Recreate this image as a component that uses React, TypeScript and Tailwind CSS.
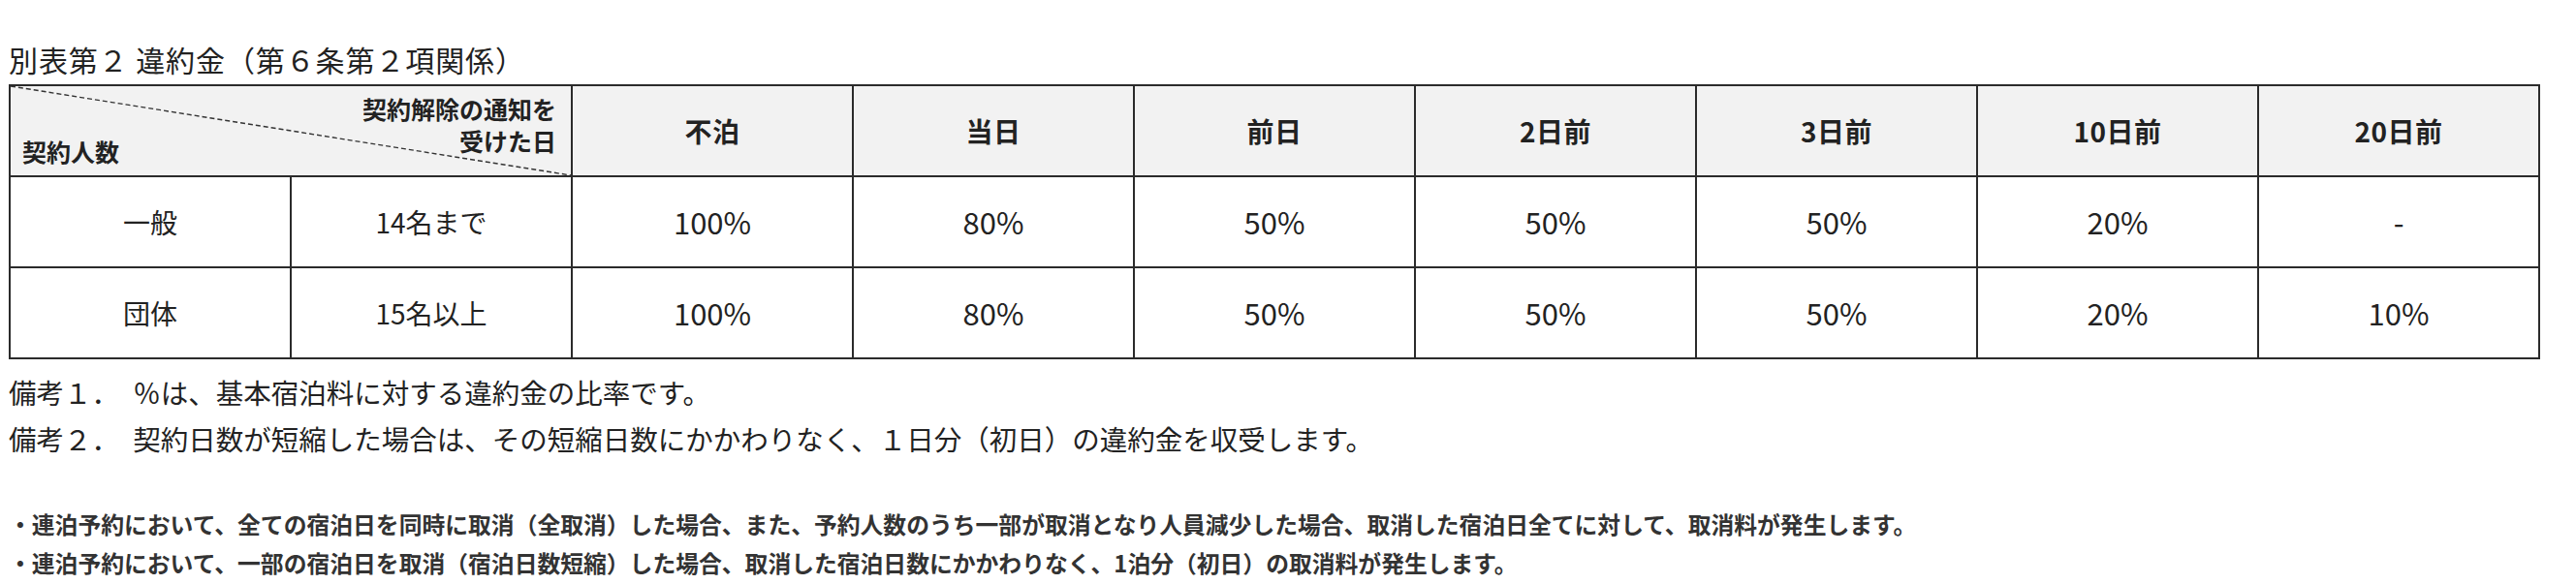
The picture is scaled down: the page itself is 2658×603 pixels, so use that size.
const COLS = ["不泊", "当日", "前日", "2日前", "3日前", "10日前", "20日前"];

const ROWS = [
  { type: "一般", size: "14名まで", values: ["100%", "80%", "50%", "50%", "50%", "20%", "-"] },
  { type: "団体", size: "15名以上", values: ["100%", "80%", "50%", "50%", "50%", "20%", "10%"] },
];

const cell = "border-2 border-[#2b2b2b] text-center align-middle";

export default function App() {
  return (
    <div
      className="min-h-[603px] bg-white pl-[9px] pt-[43px] text-[#222]"
      style={{ fontFamily: '"Noto Sans CJK JP", "Noto Sans", sans-serif' }}
    >
      <h1 className="text-[30px] leading-[37px] font-normal tracking-[0.03em]">
        別表第２ 違約金（第６条第２項関係）
      </h1>

      <table className="mt-[7px] w-[2610px] table-fixed border-collapse">
        <colgroup>
          {Array.from({ length: 9 }).map((_, i) => (
            <col key={i} className="w-[290px]" />
          ))}
        </colgroup>
        <thead>
          <tr className="h-[94px] bg-[#f2f2f2]">
            <th colSpan={2} className="relative border-2 border-[#2b2b2b] p-0 font-bold">
              <svg
                className="absolute inset-0 h-full w-full"
                viewBox="0 0 100 100"
                preserveAspectRatio="none"
              >
                <line
                  x1="0"
                  y1="0"
                  x2="100"
                  y2="100"
                  stroke="#333"
                  strokeWidth="1.4"
                  strokeDasharray="5 3"
                  vectorEffect="non-scaling-stroke"
                />
              </svg>
              {/* both labels share one grid cell so they can overlap vertically */}
              <div className="relative grid h-[90px] text-[25px] leading-[33px]">
                <div className="col-start-1 row-start-1 self-start justify-self-end pt-[6px] pr-[15px] text-right">
                  契約解除の通知を
                  <br />
                  受けた日
                </div>
                <div className="col-start-1 row-start-1 self-end justify-self-start pb-[7px] pl-[12px] text-left">
                  契約人数
                </div>
              </div>
            </th>
            {COLS.map((c) => (
              <th key={c} className={`${cell} text-[28px] font-bold tracking-[0.02em]`}>
                {c}
              </th>
            ))}
          </tr>
        </thead>
        <tbody>
          {ROWS.map((r) => (
            <tr key={r.type} className="h-[94px] text-[28px]">
              <td className={cell}>{r.type}</td>
              <td className={cell}>{r.size}</td>
              {r.values.map((v, i) => (
                <td key={i} className={`${cell} text-[31px]`}>
                  {v}
                </td>
              ))}
            </tr>
          ))}
        </tbody>
      </table>

      <div className="mt-[10px] text-[28.5px] leading-[48px]">
        <p>備考１．　％は、基本宿泊料に対する違約金の比率です。</p>
        <p>備考２．　契約日数が短縮した場合は、その短縮日数にかかわりなく、１日分（初日）の違約金を収受します。</p>
      </div>

      <div className="mt-[44px] text-[23.8px] leading-[40px] font-bold text-[#333]">
        <p>・連泊予約において、全ての宿泊日を同時に取消（全取消）した場合、また、予約人数のうち一部が取消となり人員減少した場合、取消した宿泊日全てに対して、取消料が発生します。</p>
        <p>・連泊予約において、一部の宿泊日を取消（宿泊日数短縮）した場合、取消した宿泊日数にかかわりなく、1泊分（初日）の取消料が発生します。</p>
      </div>
    </div>
  );
}
